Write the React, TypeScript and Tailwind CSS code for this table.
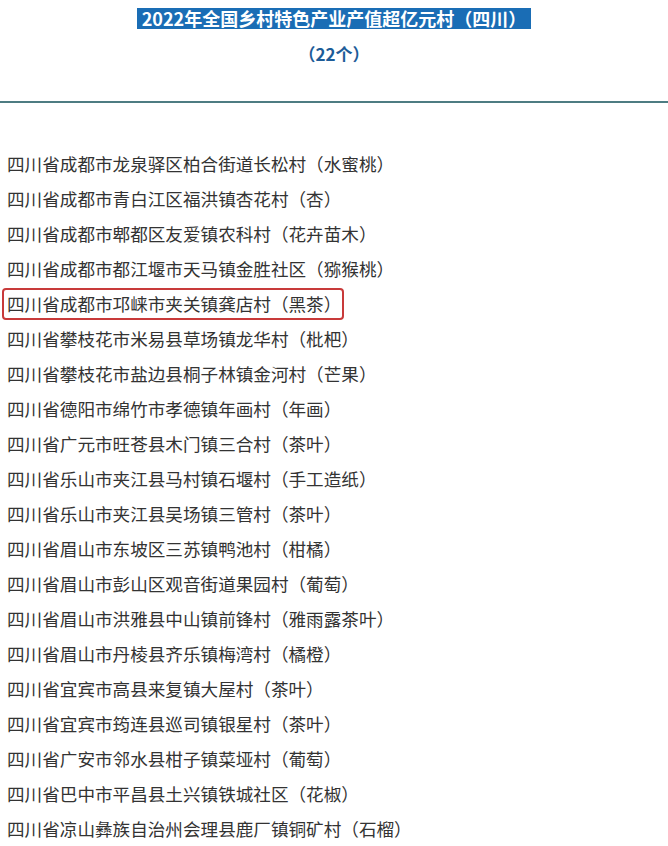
const villages: string[] = [
  "四川省成都市龙泉驿区柏合街道长松村（水蜜桃）",
  "四川省成都市青白江区福洪镇杏花村（杏）",
  "四川省成都市郫都区友爱镇农科村（花卉苗木）",
  "四川省成都市都江堰市天马镇金胜社区（猕猴桃）",
  "四川省成都市邛崃市夹关镇龚店村（黑茶）",
  "四川省攀枝花市米易县草场镇龙华村（枇杷）",
  "四川省攀枝花市盐边县桐子林镇金河村（芒果）",
  "四川省德阳市绵竹市孝德镇年画村（年画）",
  "四川省广元市旺苍县木门镇三合村（茶叶）",
  "四川省乐山市夹江县马村镇石堰村（手工造纸）",
  "四川省乐山市夹江县吴场镇三管村（茶叶）",
  "四川省眉山市东坡区三苏镇鸭池村（柑橘）",
  "四川省眉山市彭山区观音街道果园村（葡萄）",
  "四川省眉山市洪雅县中山镇前锋村（雅雨露茶叶）",
  "四川省眉山市丹棱县齐乐镇梅湾村（橘橙）",
  "四川省宜宾市高县来复镇大屋村（茶叶）",
  "四川省宜宾市筠连县巡司镇银星村（茶叶）",
  "四川省广安市邻水县柑子镇菜垭村（葡萄）",
  "四川省巴中市平昌县土兴镇铁城社区（花椒）",
  "四川省凉山彝族自治州会理县鹿厂镇铜矿村（石榴）",
];

// the one row the screenshot circles in red
const highlighted = 4;

export default function App() {
  return (
    <div className="w-[668px] h-[846px] overflow-hidden bg-white font-['Noto_Sans_CJK_SC','Noto_Sans',sans-serif]">
      <div className="flex flex-col items-center pt-[8px]">
        <h1 className="bg-[#1a6db5] text-white font-bold text-[18px] leading-[21px] h-[21px] px-[5px] whitespace-nowrap">
          2022年全国乡村特色产业产值超亿元村（四川）
        </h1>
        <p className="mt-[13px] text-[#1d5c98] font-bold text-[17px] leading-[24px]">
          （22个）
        </p>
      </div>
      <div className="mt-[35px] h-[2px] bg-[#4d7c82]" />
      <ul className="pt-[43px] text-[#333333] text-[17.6px] leading-[35px]">
        {villages.map((name, idx) => (
          <li key={idx} className="h-[35px] px-[2px]">
            <span
              className={
                idx === highlighted
                  ? "inline-flex items-center h-[32px] pl-[3px] pr-[1px] border-2 border-[#c83a3a] rounded-[4px]"
                  : "inline-block pl-[5px] whitespace-nowrap"
              }
            >
              {name}
            </span>
          </li>
        ))}
      </ul>
    </div>
  );
}
